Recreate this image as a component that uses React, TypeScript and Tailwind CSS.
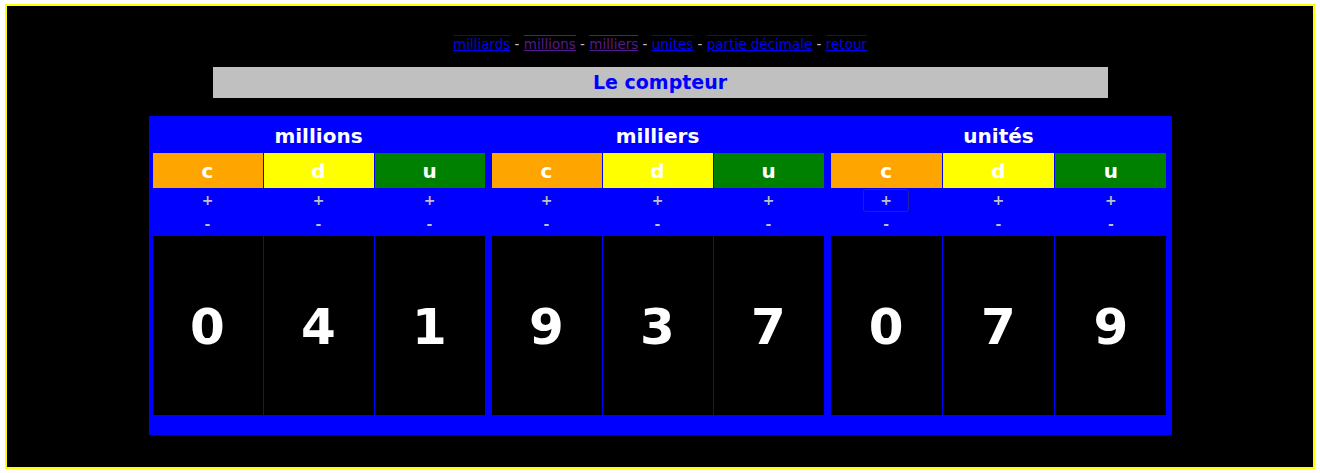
const font = { fontFamily: '"Comic Sans MS", "DejaVu Sans", sans-serif' }

type Group = { title: string; width: string; digits: number[] }

const groups: Group[] = [
  { title: 'millions', width: 'w-[332px]', digits: [0, 4, 1] },
  { title: 'milliers', width: 'w-[332px]', digits: [9, 3, 7] },
  { title: 'unités', width: 'w-[336px]', digits: [0, 7, 9] },
]

const heads = [
  { l: 'c', bg: 'bg-[#ffa500]' },
  { l: 'd', bg: 'bg-[#ffff00]' },
  { l: 'u', bg: 'bg-[#008000]' },
]

const links = [
  { t: 'milliards', c: 'text-[#0000ee]' },
  { t: 'millions', c: 'text-[#551a8b]' },
  { t: 'milliers', c: 'text-[#551a8b]' },
  { t: 'unites', c: 'text-[#0000ee]' },
  { t: 'partie décimale', c: 'text-[#0000ee]' },
  { t: 'retour', c: 'text-[#0000ee]' },
]

function Counter({ g, gi }: { g: Group; gi: number }) {
  return (
    <div className={`${g.width} flex flex-col`}>
      <div className="h-[37px] flex items-center justify-center pt-[2px] text-white text-[20px] font-bold">{g.title}</div>
      <div className="h-[35px] flex gap-px">
        {heads.map(h => (
          <div key={h.l} className={`flex-1 ${h.bg} flex items-center justify-center text-white text-[20px] font-bold`}>{h.l}</div>
        ))}
      </div>
      <div className="h-[24px] flex gap-px">
        {heads.map((h, i) => (
          <div key={h.l} className="flex-1 flex items-center justify-center">
            <span className={`w-[46px] h-[23px] flex items-center justify-center text-[#c0c0c0] text-[14px] font-bold rounded-[3px] border ${gi === 2 && i === 0 ? 'border-[#24249c]' : 'border-transparent'}`}>+</span>
          </div>
        ))}
      </div>
      <div className="h-[24px] flex gap-px">
        {heads.map(h => (
          <div key={h.l} className="flex-1 flex items-center justify-center text-[#c0c0c0] text-[14px] font-bold">-</div>
        ))}
      </div>
      <div className="h-[179px] flex gap-px">
        {g.digits.map((d, i) => (
          <div key={i} className="flex-1 bg-black flex items-center justify-center text-white text-[50px] font-bold pt-[4px]">{d}</div>
        ))}
      </div>
    </div>
  )
}

export default function App() {
  return (
    <div className="bg-white w-[1320px] h-[473px] pt-[4px] pl-[5px]" style={font}>
      <div className="w-[1310px] h-[465px] border-2 border-[#ffff00] bg-black flex flex-col items-center pt-[27px]">
        <div className="h-[20px] flex items-center text-[13.5px] text-[#c0c0c0] whitespace-pre pt-[2px]">
          {links.map((l, i) => (
            <span key={l.t}>
              <a href="#" className={`${l.c} [text-decoration-line:underline_overline]`}>{l.t}</a>
              {i < links.length - 1 && ' - '}
            </span>
          ))}
        </div>
        <div className="mt-[14px] w-[895px] h-[31px] bg-[#c0c0c0] flex items-center justify-center text-[#0000ff] text-[19px] font-bold">
          Le compteur
        </div>
        <div className="mt-[18px] w-[1023px] bg-[#0000ff] flex gap-[7px] pl-[4px] pr-[5px] pb-[20px]">
          {groups.map((g, gi) => (
            <Counter key={g.title} g={g} gi={gi} />
          ))}
        </div>
      </div>
    </div>
  )
}
